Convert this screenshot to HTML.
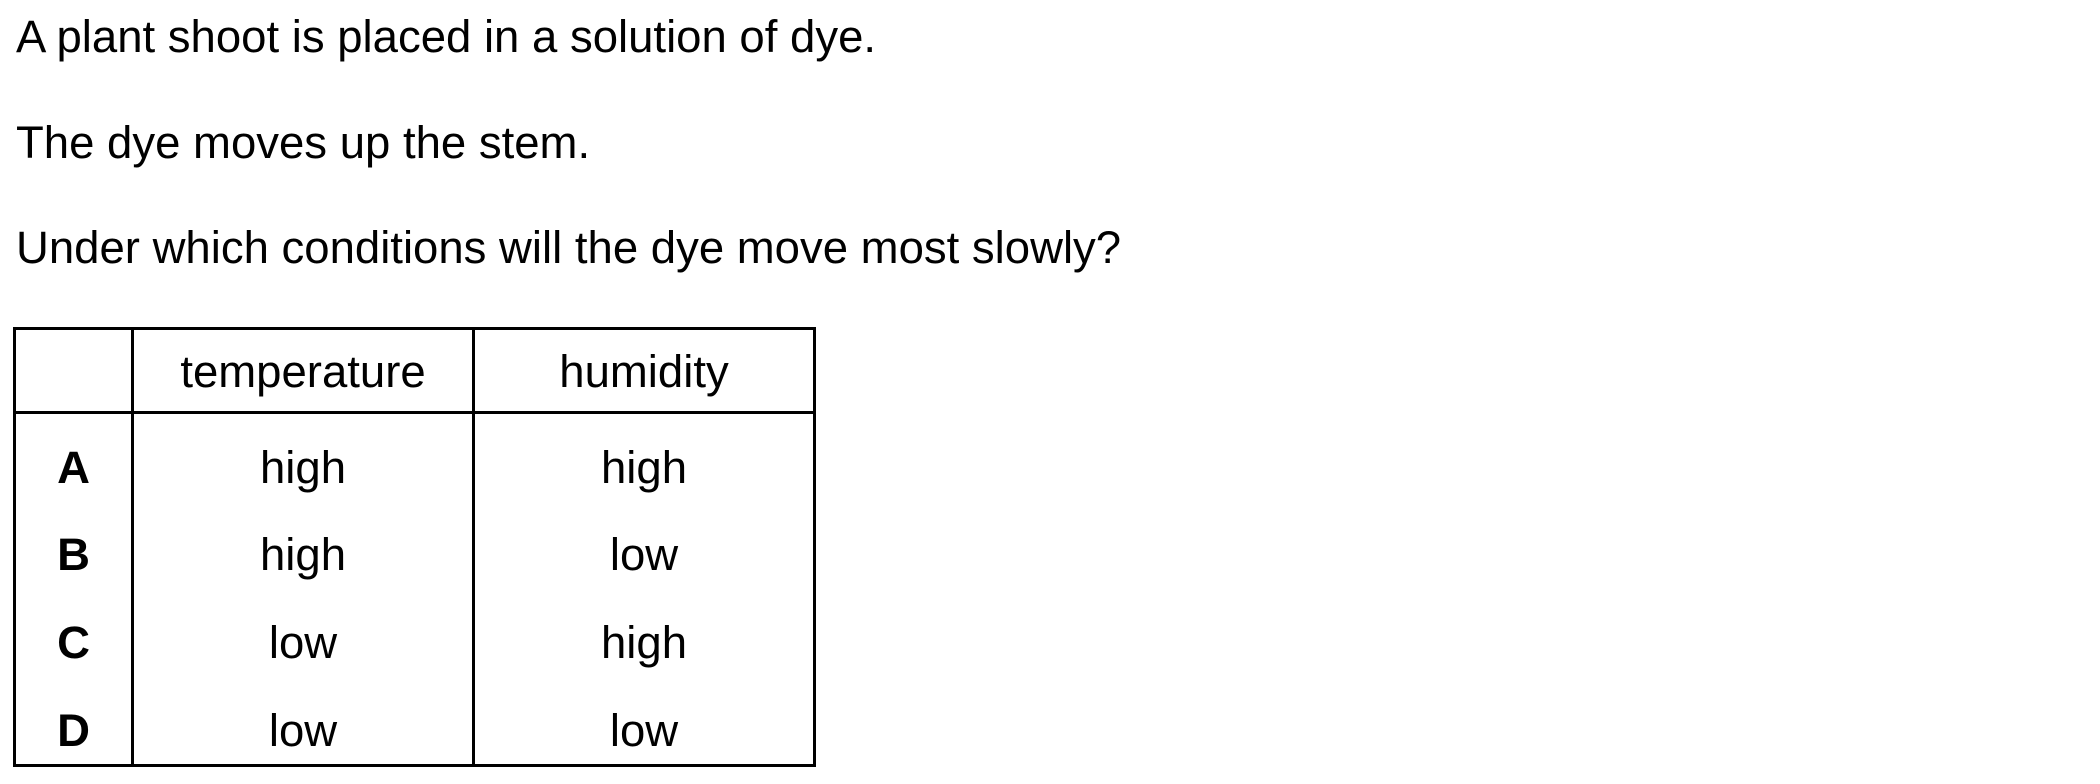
<!DOCTYPE html>
<html><head><meta charset="utf-8"><style>
body{margin:0;width:2100px;height:784px;background:#fff;position:relative;overflow:hidden;font-family:"Liberation Sans",Arial,sans-serif;color:#000}
.t{position:absolute;font-size:45.5px;line-height:43px;white-space:nowrap}
.c{position:absolute;font-size:45.5px;line-height:43px;white-space:nowrap;text-align:center}
.l{position:absolute;background:#000}
</style></head><body>
<div class="t" style="left:16px;top:15px">A plant shoot is placed in a solution of dye.</div>
<div class="t" style="left:16px;top:121px">The dye moves up the stem.</div>
<div class="t" style="left:16px;top:226px">Under which conditions will the dye move most slowly?</div>

<div class="l" style="left:13px;top:327px;width:803px;height:3px"></div>
<div class="l" style="left:13px;top:411px;width:803px;height:3px"></div>
<div class="l" style="left:13px;top:764px;width:803px;height:3px"></div>
<div class="l" style="left:13px;top:327px;width:3px;height:440px"></div>
<div class="l" style="left:131px;top:327px;width:3px;height:440px"></div>
<div class="l" style="left:472px;top:327px;width:3px;height:440px"></div>
<div class="l" style="left:813px;top:327px;width:3px;height:440px"></div>

<div class="c" style="left:134px;width:338px;top:350px">temperature</div>
<div class="c" style="left:475px;width:338px;top:350px">humidity</div>

<div class="c" style="left:16px;width:115px;top:446px;font-weight:bold">A</div>
<div class="c" style="left:134px;width:338px;top:446px">high</div>
<div class="c" style="left:475px;width:338px;top:446px">high</div>

<div class="c" style="left:16px;width:115px;top:533px;font-weight:bold">B</div>
<div class="c" style="left:134px;width:338px;top:533px">high</div>
<div class="c" style="left:475px;width:338px;top:533px">low</div>

<div class="c" style="left:16px;width:115px;top:621px;font-weight:bold">C</div>
<div class="c" style="left:134px;width:338px;top:621px">low</div>
<div class="c" style="left:475px;width:338px;top:621px">high</div>

<div class="c" style="left:16px;width:115px;top:709px;font-weight:bold">D</div>
<div class="c" style="left:134px;width:338px;top:709px">low</div>
<div class="c" style="left:475px;width:338px;top:709px">low</div>
</body></html>
